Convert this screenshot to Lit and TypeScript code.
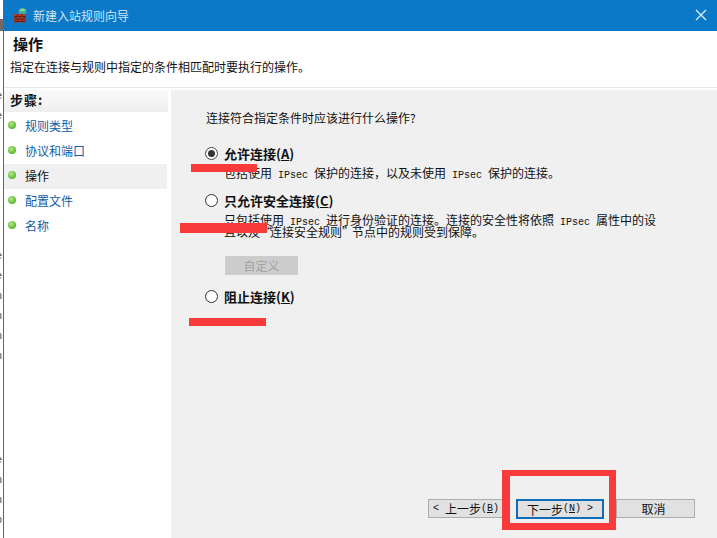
import { LitElement, html, css } from "lit";
import { customElement } from "lit/decorators.js";

@customElement("app-root")
export class AppRoot extends LitElement {
  static styles = css`
    :host { display: block; width: 717px; height: 538px; overflow: hidden; position: relative; background: #fff; font-family: "Noto Sans CJK SC", "Liberation Sans", sans-serif; font-size: 12px; color: #111; }
    * { box-sizing: border-box; }
    .page { display: flex; height: 538px; }
    .desk { width: 3px; flex: none; overflow: hidden; display: flex; flex-direction: column; font: 11px/12px "Liberation Sans", sans-serif; color: #223; opacity: .85; will-change: transform; }
    .desk .dark { height: 12px; margin-top: 19px; background: #5a5048; flex: none; }
    .desk .chars { padding-top: 58px; height: 292px; flex: none; display: flex; flex-direction: column; gap: 8px; margin-left: -4px; }
    .desk .low { display: flex; flex-direction: column; gap: 8px; margin-left: -4px; padding-top: 130px; }
    .win { flex: 1; display: flex; flex-direction: column; border-left: 1px solid #1479c4; min-width: 0; }
    .title { height: 31px; flex: none; background: #0b78c8; color: #cfe6f7; display: flex; align-items: center; padding: 0 0 1px 9px; gap: 5px; font-size: 12px; }
    .title svg.logo { width: 15px; height: 15px; flex: none; }
    .title span { flex: 1; }
    .close { width: 14px; height: 14px; margin-right: 9px; flex: none; }
    .head { height: 57px; flex: none; background: #fff; border-bottom: 1px solid #e6e6e6; padding: 2px 0 0 6px; }
    .head h1 { margin: 0 0 0 3px; font-size: 15px; line-height: 22px; font-weight: 700; color: #111; }
    .head p { margin: 4px 0 0; font-size: 12px; line-height: 16px; }
    .body { flex: 1; display: flex; min-height: 0; background: #fff; padding-top: 2px; }
    .side { width: 164px; flex: none; background: #fff; }
    .side .cap { height: 22px; padding-left: 6px; font-weight: 700; font-size: 13px; letter-spacing: 1px; line-height: 19px; background: linear-gradient(#fafafa, #efefef); }
    .side ul { list-style: none; margin: 2px 0 0; padding: 0; }
    .side li { height: 25px; display: flex; align-items: center; gap: 9px; padding: 0 0 2px 4px; color: #0f5ca6; }
    .side li.on { color: #111; background: #f0f0f0; width: 163px; }
    .dot { width: 8px; height: 8px; border-radius: 50%; background: radial-gradient(circle at 40% 35%, #b6e88c, #5cb82e 70%); flex: none; margin-top: -2px; }
    .main { flex: 1; margin-left: 3px; background: #f0f0f0; padding: 20px 0 0 35px; display: flex; flex-direction: column; position: relative; min-width: 0; }
    .q { line-height: 16px; height: 16px; }
    .opt { display: flex; align-items: center; gap: 6px; height: 16px; margin-left: -1px; font-weight: 700; font-size: 13px; color: #111; }
    .opt.a { margin-top: 19px; }
    .opt.b { margin-top: 13px; }
    .opt.c { margin-top: 13px; }
    .radio { width: 13px; height: 13px; border-radius: 50%; border: 1px solid #333; background: #fff; flex: none; display: flex; align-items: center; justify-content: center; }
    .radio.on { border-color: #444; }
    .radio.on i { width: 7px; height: 7px; border-radius: 50%; background: #333; display: block; }
    .desc { margin: 6px 0 0 18px; white-space: nowrap; }
    .line { display: block; height: 12px; line-height: 12px; }
    .m { font: 10px/12px "Liberation Mono", monospace; }
    .quote { letter-spacing: -2px; }
    .custom { margin: 18px 0 0 19px; width: 73px; height: 19px; background: #cccccc; color: #a3a3a3; display: flex; align-items: center; justify-content: center; }
    .foot { position: absolute; left: 257px; top: 409px; display: flex; gap: 12px; }
    .btn { height: 19px; width: 76px; background: #e1e1e1; border: 1px solid #adadad; display: flex; align-items: center; justify-content: center; white-space: pre; color: #111; }
    .btn.pri { width: 88px; height: 20px; border: 2px solid #0f6cb8; }
    .btn.last { width: 79px; padding-right: 4px; }
    .mark { position: absolute; background: #f93a3a; }
    .frame { position: absolute; left: 502px; top: 470px; width: 114px; height: 60px; border: solid #f93a3a; border-width: 6px 7px 7px 8px; }
  `;

  render() {
    return html`
      <div class="page">
        <div class="desk">
          <div class="dark"></div>
          <div class="chars">${["e","e","l","r","l","l","l","t","e","e","n","n","n","n"].map(c => html`<span>${c}</span>`)}</div>
          <div class="low">${["e","n","n","o"].map(c => html`<span>${c}</span>`)}</div>
        </div>
        <div class="win">
          <div class="title">
            <svg class="logo" viewBox="0 0 15 15">
              <circle cx="9.5" cy="4" r="4" fill="#3fa6a0"/>
              <path d="M6 2.5c2-2.5 5-2.5 7 0-2 1-5 1-7 0z" fill="#7fe08a"/>
              <rect x="1" y="6" width="12" height="8.5" fill="#a83a2e"/>
              <path d="M1 8.5h12M1 11h12M1 13.5h12M4.5 6v2.5M9 6v2.5M3 8.5V11M7 8.5V11M11 8.5V11M4.5 11v2.5M9 11v2.5" stroke="#5c1c14" stroke-width=".8" fill="none"/>
            </svg>
            <span>新建入站规则向导</span>
            <svg class="close" viewBox="0 0 14 14"><path d="M2 2l10 10M12 2L2 12" stroke="#d5ecfa" stroke-width="1.4" fill="none"/></svg>
          </div>
          <div class="head">
            <h1>操作</h1>
            <p>指定在连接与规则中指定的条件相匹配时要执行的操作。</p>
          </div>
          <div class="body">
            <div class="side">
              <div class="cap">步骤:</div>
              <ul>
                <li><i class="dot"></i>规则类型</li>
                <li><i class="dot"></i>协议和端口</li>
                <li class="on"><i class="dot"></i>操作</li>
                <li><i class="dot"></i>配置文件</li>
                <li><i class="dot"></i>名称</li>
              </ul>
            </div>
            <div class="main">
              <div class="q">连接符合指定条件时应该进行什么操作?</div>
              <div class="opt a"><span class="radio on"><i></i></span><span>允许连接(<u>A</u>)</span></div>
              <div class="desc"><span class="line">包括使用<span class="m"> IPsec </span>保护的连接&#xFF0C;以及未使用<span class="m"> IPsec </span>保护的连接。</span></div>
              <div class="opt b"><span class="radio"></span><span>只允许安全连接(<u>C</u>)</span></div>
              <div class="desc">
                <span class="line">只包括使用<span class="m"> IPsec </span>进行身份验证的连接。连接的安全性将依照<span class="m"> IPsec </span>属性中的设</span>
                <span class="line">且以及<span class="quote">“</span>连接安全规则<span class="quote">”</span>节点中的规则受到保障。</span>
              </div>
              <div class="custom">自定义</div>
              <div class="opt c"><span class="radio"></span><span>阻止连接(<u>K</u>)</span></div>
              <div class="foot">
                <div class="btn"><span class="m">&lt; </span>上一步<span class="m">(<u>B</u>)</span></div>
                <div class="btn pri">下一步<span class="m">(<u>N</u>) &gt;</span></div>
                <div class="btn last">取消</div>
              </div>
            </div>
          </div>
        </div>
      </div>
      <div class="mark" style="left:191px;top:164px;width:66px;height:8px"></div>
      <div class="mark" style="left:180px;top:223px;width:87px;height:10px"></div>
      <div class="mark" style="left:189px;top:318px;width:77px;height:8px"></div>
      <div class="frame"></div>
    `;
  }
}
